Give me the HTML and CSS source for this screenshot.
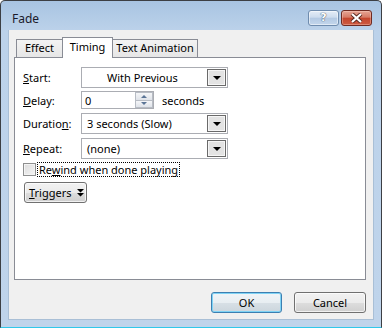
FILE: index.html
```html
<!DOCTYPE html>
<html>
<head>
<meta charset="utf-8">
<link rel="stylesheet" href="styles.css">
</head>
<body>
<div class="window">
  <div class="titlebar">
    <span class="title">Fade</span>
    <div class="caption-buttons">
      <div class="cbtn help"><span>?</span></div>
      <div class="cbtn close">
        <svg width="13" height="10" viewBox="0 0 13 10">
          <path d="M2 1 L11 9 M11 1 L2 9" stroke="#5a2a22" stroke-width="4" fill="none"/>
          <path d="M2 1 L11 9 M11 1 L2 9" stroke="#ffffff" stroke-width="2.2" fill="none"/>
        </svg>
      </div>
    </div>
  </div>
  <div class="client">
    <div class="tabs">
      <div class="tab tab-effect">Effect</div>
      <div class="tab tab-timing selected">Timing</div>
      <div class="tab tab-text">Text Animation</div>
    </div>
    <div class="panel">
      <div class="row row-start">
        <span class="label"><u>S</u>tart:</span>
        <div class="combo"><span class="combo-text centered">With Previous</span><span class="drop"><i class="tri"></i></span></div>
      </div>
      <div class="row row-delay">
        <span class="label"><u>D</u>elay:</span>
        <div class="spin">
          <span class="spin-text">0</span>
          <span class="spin-btns">
            <span class="spin-btn"><i class="up"></i></span>
            <span class="spin-btn"><i class="down"></i></span>
          </span>
        </div>
        <span class="unit">seconds</span>
      </div>
      <div class="row row-duration">
        <span class="label">Duratio<u>n</u>:</span>
        <div class="combo"><span class="combo-text">3 seconds (Slow)</span><span class="drop"><i class="tri"></i></span></div>
      </div>
      <div class="row row-repeat">
        <span class="label"><u>R</u>epeat:</span>
        <div class="combo"><span class="combo-text">(none)</span><span class="drop"><i class="tri"></i></span></div>
      </div>
      <div class="row row-check">
        <span class="checkbox"></span>
        <span class="check-label">Re<u>w</u>ind when done playing</span>
      </div>
      <div class="row row-triggers">
        <div class="triggers"><span><u>T</u>riggers</span>
          <svg width="7" height="8" viewBox="0 0 7 8">
            <path d="M0 0 H7 L3.5 3.5 Z M0 4 H7 L3.5 7.5 Z" fill="#000"/>
          </svg>
        </div>
      </div>
    </div>
    <div class="footer">
      <div class="btn btn-ok">OK</div>
      <div class="btn btn-cancel">Cancel</div>
    </div>
  </div>
</div>
</body>
</html>
```
FILE: styles.css
```css
html, body {
  margin: 0;
  padding: 0;
  background: #ffffff;
}
* { box-sizing: border-box; }

.window {
  width: 382px;
  height: 328px;
  border: 1px solid #3c3f44;
  border-bottom: 1px solid #2fc8ea;
  border-radius: 5px 5px 0 0;
  background: linear-gradient(#a8c4e2 0px, #bcd2ea 30px, #bfd4eb 100%);
  padding: 0 7px 7px 7px;
  display: flex;
  flex-direction: column;
  font-family: "Noto Sans", "DejaVu Sans", sans-serif;
  font-size: 11px;
  color: #000;
}

.titlebar {
  height: 29px;
  display: flex;
  justify-content: space-between;
  align-items: flex-start;
  padding: 0 2px 0 4px;
}
.title {
  font-size: 12px;
  color: #1a1a2a;
  line-height: 14px;
  margin-top: 11px;
}
.caption-buttons {
  display: flex;
  gap: 2px;
  margin-top: 9px;
}
.cbtn {
  width: 31px;
  height: 16px;
  border-radius: 3px;
  display: flex;
  align-items: center;
  justify-content: center;
}
.help {
  border: 1px solid #6f8cae;
  background: linear-gradient(#e4edf7 0%, #cddcee 45%, #b3c9e3 50%, #c3d6ec 100%);
  box-shadow: inset 0 0 0 1px rgba(255,255,255,0.5);
}
.help span {
  font-family: "DejaVu Sans", sans-serif;
  font-weight: bold;
  font-size: 11px;
  line-height: 12px;
  color: #ffffff;
  text-shadow: 0 0 1px #3a4a60, 0 0 1px #3a4a60;
}
.close {
  border: 1px solid #6e2a22;
  background: linear-gradient(#e6a595 0%, #d77a65 45%, #c4452d 50%, #cd5b42 100%);
  box-shadow: inset 0 0 0 1px rgba(255,220,210,0.35);
}

.client {
  flex: 1;
  background: #f0f0f0;
  border: 1px solid #a9bfd6;
  border-top: none;
  padding: 7px 7px 0 5px;
  display: flex;
  flex-direction: column;
}

.tabs {
  height: 21px;
  display: flex;
  align-items: flex-end;
  padding-left: 2px;
  position: relative;
  z-index: 1;
}
.tab {
  height: 18px;
  line-height: 16px;
  text-align: center;
  border: 1px solid #898c95;
  border-bottom: none;
  background: linear-gradient(#f3f3f3, #e6e6e6);
  margin-bottom: 1px;
}
.tab-effect { width: 46px; border-right: none; }
.tab-timing { width: 51px; }
.tab-text { width: 85px; border-left: none; }
.tab.selected {
  height: 21px;
  margin-bottom: 0;
  background: #ffffff;
  line-height: 17px;
  padding-bottom: 3px;
}

.panel {
  height: 223px;
  margin-top: -1px;
  border: 1px solid #898c95;
  background: #ffffff;
  padding: 9px 0 0 8px;
  display: flex;
  flex-direction: column;
}

.row {
  display: flex;
  align-items: center;
}
.row-start { height: 21px; }
.row-delay { height: 18px; margin-top: 3px; }
.row-duration { height: 21px; margin-top: 4px; }
.row-repeat { height: 21px; margin-top: 4px; }
.row-check { height: 15px; margin-top: 3px; }
.row-triggers { height: 21px; margin-top: 5px; }

.label {
  width: 58px;
  flex: none;
}

.combo {
  width: 147px;
  height: 21px;
  border: 1px solid #abadb3;
  padding: 1px;
  display: flex;
  align-items: center;
}
.combo-text {
  flex: 1;
  padding-left: 4px;
}
.combo-text.centered { padding-left: 24px; }
.drop {
  width: 19px;
  height: 17px;
  border: 1px solid #6a6a6a;
  background: #e3e3e3;
  box-shadow: inset 0 0 0 1px #f6f6f6;
  display: flex;
  align-items: center;
  justify-content: center;
}
.tri {
  width: 0;
  height: 0;
  border-left: 4px solid transparent;
  border-right: 4px solid transparent;
  border-top: 4px solid #000;
  margin-top: 1px;
}

.spin {
  width: 73px;
  height: 18px;
  border: 1px solid #abadb3;
  display: flex;
  align-items: center;
}
.spin-text {
  flex: 1;
  padding-left: 3px;
}
.spin-btns {
  width: 18px;
  height: 16px;
  display: flex;
  flex-direction: column;
  margin-right: 0;
}
.spin-btn {
  flex: 1;
  border: 1px solid #b7bcc4;
  background: linear-gradient(#f5f6f8, #dfe3e9);
  display: flex;
  align-items: center;
  justify-content: center;
}
.spin-btn + .spin-btn { border-top: none; }
.up {
  width: 0; height: 0;
  border-left: 3px solid transparent;
  border-right: 3px solid transparent;
  border-bottom: 3px solid #5b7596;
}
.down {
  width: 0; height: 0;
  border-left: 3px solid transparent;
  border-right: 3px solid transparent;
  border-top: 3px solid #5b7596;
}
.unit {
  margin-left: 8px;
}

.checkbox {
  width: 13px;
  height: 13px;
  border: 1px solid #8e8f8f;
  background: linear-gradient(135deg, #dcdcdc, #f5f5f5);
  box-shadow: inset 0 0 0 1px #f4f4f4;
  flex: none;
}
.check-label {
  margin-left: 1px;
  padding: 0 1px 0 1px;
  height: 15px;
  line-height: 13px;
  border: 1px dotted #000;
}

.triggers {
  margin-left: 1px;
  width: 63px;
  height: 21px;
  border: 1px solid #707070;
  border-radius: 3px;
  background: linear-gradient(#f2f2f2 0%, #ebebeb 50%, #dddddd 51%, #cfcfcf 100%);
  box-shadow: inset 0 0 0 1px rgba(255,255,255,0.7);
  display: flex;
  align-items: center;
  padding-left: 4px;
  gap: 5px;
}

.footer {
  display: flex;
  justify-content: flex-end;
  gap: 12px;
  margin-top: 12px;
}
.btn {
  height: 21px;
  border-radius: 3px;
  text-align: center;
  line-height: 19px;
  background: linear-gradient(#f2f2f2 0%, #ebebeb 50%, #dddddd 51%, #cfcfcf 100%);
}
.btn-ok {
  width: 71px;
  border: 1px solid #3c7fb1;
  box-shadow: inset 0 0 0 1px #7fd3f5;
  background: linear-gradient(#f0f4f7 0%, #e8eef2 50%, #d8e0e6 51%, #ccd6dd 100%);
}
.btn-cancel {
  width: 72px;
  border: 1px solid #707070;
  box-shadow: inset 0 0 0 1px rgba(255,255,255,0.7);
}
```
